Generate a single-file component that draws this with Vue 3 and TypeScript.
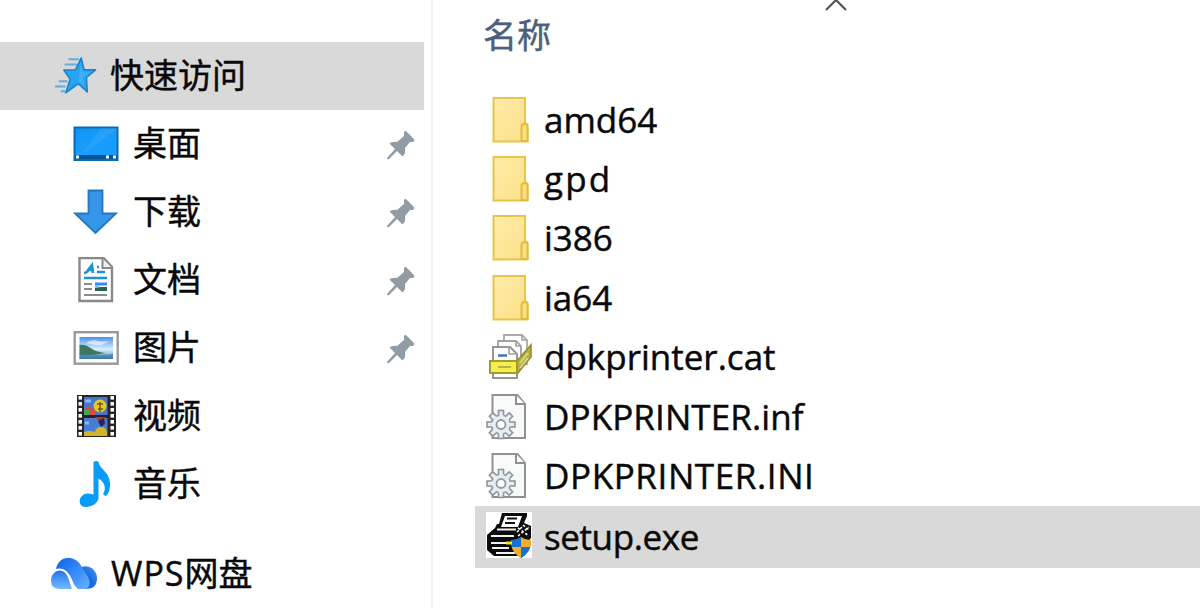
<script setup lang="ts">
interface PlaceItem { label: string; icon: string; pinned: boolean }
interface FileItem { name: string; icon: string; tone: string; selected?: boolean }

const places: PlaceItem[] = [
  { label: '桌面', icon: 'desktop', pinned: true },
  { label: '下载', icon: 'download', pinned: true },
  { label: '文档', icon: 'document', pinned: true },
  { label: '图片', icon: 'picture', pinned: true },
  { label: '视频', icon: 'video', pinned: false },
  { label: '音乐', icon: 'music', pinned: false },
]

const files: FileItem[] = [
  { name: 'amd64', icon: 'folder', tone: 'plain' },
  { name: 'gpd', icon: 'folder', tone: 'wide' },
  { name: 'i386', icon: 'folder', tone: 'plain' },
  { name: 'ia64', icon: 'folder', tone: 'plain' },
  { name: 'dpkprinter.cat', icon: 'catalog', tone: 'plain' },
  { name: 'DPKPRINTER.inf', icon: 'config', tone: 'inf' },
  { name: 'DPKPRINTER.INI', icon: 'config', tone: 'ini' },
  { name: 'setup.exe', icon: 'printer', tone: 'setup', selected: true },
]
const teeth = [0, 45, 90, 135, 180, 225, 270, 315]
const holes = [3, 9, 15, 21, 27, 33, 39]
</script>

<template>
  <div class="explorer">
    <svg width="0" height="0" class="defs">
      <defs>
        <linearGradient id="deskFill" x1="0" y1="0" x2="1" y2="1">
          <stop offset="0" stop-color="#0d95f7" /><stop offset=".5" stop-color="#1b9dfb" />
          <stop offset=".52" stop-color="#0a96fc" /><stop offset="1" stop-color="#0795ff" />
        </linearGradient>
        <linearGradient id="folderFill" x1="0" y1="0" x2="1" y2="1">
          <stop offset="0" stop-color="#ffecaa" /><stop offset="1" stop-color="#fce086" />
        </linearGradient>
        <linearGradient id="skyFill" x1="0" y1="0" x2="0" y2="1">
          <stop offset="0" stop-color="#4b91e6" /><stop offset=".55" stop-color="#d8efff" />
          <stop offset=".75" stop-color="#9fc4da" /><stop offset="1" stop-color="#3b79ad" />
        </linearGradient>
        <linearGradient id="cloudTop" x1="0" y1="0" x2="1" y2="1">
          <stop offset="0" stop-color="#0e63e8" /><stop offset=".5" stop-color="#3489fb" /><stop offset="1" stop-color="#69b5ff" />
        </linearGradient>
        <linearGradient id="cloudSide" x1="0" y1="0" x2="0" y2="1">
          <stop offset="0" stop-color="#2272ec" /><stop offset="1" stop-color="#72bcff" />
        </linearGradient>
        <linearGradient id="cloudRight" x1="0" y1="1" x2="1" y2="0">
          <stop offset="0" stop-color="#2b7ef0" /><stop offset=".5" stop-color="#1768dd" /><stop offset="1" stop-color="#4a9cff" />
        </linearGradient>
      </defs>
    </svg>

    <aside class="sidebar">
      <div class="row root active">
        <svg class="star" viewBox="0 0 44 44">
          <path d="M27.500 3l3 12.500h12L33 23.600l.8 15.200-9.300-8.700-13.200 9.500 4.500-14.300L9.200 15.800l12.200-.3z" fill="#27a4f5" stroke="#1a82c8" stroke-width="1.600" stroke-linejoin="round" />
          <path d="M27 8l2.400 10h8.200l-8.200 6.200 1.400 8-6.300-4.400z" fill="#58bfff" opacity=".45" />
          <path d="M14 4.500h11M10 10h13M4 27.500h9M0 33h11M6 38h5" fill="none" stroke="#62addb" stroke-width="2" />
        </svg>
        <span class="label">快速访问</span>
      </div>

      <div v-for="p in places" :key="p.icon" class="row child">
        <svg class="icon" viewBox="0 0 46 46">
          <g v-if="p.icon === 'desktop'">
            <rect x="1.500" y="6.500" width="43" height="32.500" fill="url(#deskFill)" stroke="#0b69ae" stroke-width="2" />
            <path d="M28 7h16v27H8z" fill="#fff" opacity=".06" />
            <path d="M2 36h42" stroke="#075493" stroke-width="4" />
            <path d="M3 36h3M33 36h3M40 36h3" stroke="#fff" stroke-width="3" />
          </g>
          <path v-else-if="p.icon === 'download'" d="M15.500 1.500h14v23H43L22.500 44 2 24.500h13.500z" fill="#3595e8" stroke="#2277bd" stroke-width="1.800" />
          <g v-else-if="p.icon === 'document'">
            <path d="M6.500 1h24l8.500 9v34H6.500z" fill="#fff" stroke="#898989" stroke-width="2.400" />
            <path d="M29.500 1.500v9.500H39" fill="#eee" stroke="#898989" stroke-width="2" />
            <path d="M11 16q3 0 5-4l3-4 1 8M14 13h7M24 10h2M24 15h8M11 21h23" fill="none" stroke="#1b92d5" stroke-width="2.600" />
            <path d="M11 27h8M11 32h8M11 38h23" stroke="#8b8b8b" stroke-width="2" />
            <path d="M22 27h12" stroke="#3586ff" stroke-width="3" /><path d="M22 32h12" stroke="#29634b" stroke-width="4" />
            <path d="M22 30h4" stroke="#77b5ff" stroke-width="2" />
          </g>
          <g v-else-if="p.icon === 'picture'">
            <rect x="1.700" y="7.200" width="43" height="31.500" fill="#fff" stroke="#999" stroke-width="2.400" />
            <rect x="6.500" y="12" width="33.500" height="22" fill="url(#skyFill)" />
            <path d="M6.500 20q6-1 11 3t15 5q-14 3-26 2z" fill="#3e7662" /><path d="M6.500 29q16 2 33.500 0v5H6.500z" fill="#397baf" opacity=".65" />
            <path d="M13 18q6-4 12-2 6 1 11 0-6 5-13 4t-10-2" fill="#fff" opacity=".6" />
          </g>
          <g v-else-if="p.icon === 'video'">
            <rect x="4" y="2" width="39" height="42" fill="#252525" />
            <rect x="11" y="4" width="23.500" height="18" fill="#4675cf" /><rect x="11" y="25" width="23.500" height="18" fill="#487dd4" />
            <path d="M11 16l4-3 4 3 4-3v9H11z" fill="#d94b3f" /><circle cx="27" cy="13" r="6.500" fill="#e9c824" />
            <path d="M24 11h6M27 9v10M25 16h5" stroke="#6e5c1c" stroke-width="1.500" />
            <path d="M11 17h5v5h-5z" fill="#43a857" /><path d="M22 24h11l-5 7z" fill="#b0344a" /><path d="M25 28l6-3 1 6-4 3z" fill="#232952" />
            <path d="M11 39q5-2 11 0 1-5 6-5t6 5v4H11z" fill="#d1b42a" /><path d="M12 8h6M12 30h4" stroke="#8bb5ef" stroke-width="3" />
            <g v-for="h in holes" :key="h"><rect x="5.500" :y="h" width="3.500" height="3.600" fill="#fff" /><rect x="37.500" :y="h" width="3.500" height="3.600" fill="#fff" /></g>
          </g>
          <path v-else d="M20.500 1q3-2 5 0c1 7 11 10 11.500 21 .2 6-1 10-3.500 12.500-2 1-4-1-3-2.500 3-5 1-11-5-14.500v19.500C25 42 19 46 12.500 46 4 46 5 33 14.500 32.500q3 0 6 1z" fill="#079cf7" />
        </svg>
        <span class="label">{{ p.label }}</span>
        <svg v-if="p.pinned" class="pin" viewBox="0 0 30 30">
          <path d="M18 2q1-2 3 0l7 7q1 2-1 3h-3l-5 6q1 5-2 8h-1l-5-5-8 8q-2 1-2-1l8-9-5.500-5.500q2.500-2.500 7.500-1.500l7-6z" fill="#919ca4" />
        </svg>
      </div>

      <div class="row root cloud">
        <svg class="cloud-icon" viewBox="0 0 46 32">
          <path d="M12 12C8 11 0 14 0 23q0 8 9 8h12Q16 14 12 12z" fill="url(#cloudSide)" />
          <path d="M31 9c7-3 15 3 15 11q0 11-11 11-6 0-8-4z" fill="url(#cloudRight)" />
          <path d="M5 11C8-4 25-3 31 9l6 10q4 8-2 12h-8q-4-3-6-9Q16 10 5 11z" fill="url(#cloudTop)" />
          <path d="M5 12Q15 9 20 22q2 6 5 9" fill="none" stroke="#fff" stroke-width="2" />
        </svg>
        <span class="label"><span class="wps">WPS</span>网盘</span>
      </div>
    </aside>

    <main class="content">
      <header class="heading">
        <span>名称</span>
        <svg class="sort" viewBox="0 0 24 12"><path d="M2 10L12 0l10 10" fill="none" stroke="#555" stroke-width="2.200" /></svg>
      </header>
      <div class="files">
        <div v-for="f in files" :key="f.name" class="file" :class="{ selected: f.selected }">
          <svg class="file-icon" viewBox="0 0 46 46">
            <g v-if="f.icon === 'folder'">
              <path d="M7.500 1h31.500v25l2.500 1.500v17h-34z" fill="url(#folderFill)" stroke="#e8c549" stroke-width="2" />
              <path d="M35.500 44V30q0-3 3-3t3 3v14z" fill="#fbdf80" stroke="#e3bb40" stroke-width="2" />
            </g>
            <g v-else-if="f.icon === 'catalog'">
              <path d="M18 8V1h18l5 5v24H18z" fill="#fff" stroke="#aaa" stroke-width="1.800" />
              <path d="M12 14V7h18l5 5v23H12z" fill="#fff" stroke="#a1a1a1" stroke-width="1.800" />
              <path d="M7 44V13h17l7 7v24z" fill="#fff" stroke="#959595" stroke-width="2" />
              <path d="M23 13v7h8M30 7v5h5M36 1v5h5" fill="none" stroke="#a1a1a1" stroke-width="1.600" />
              <path d="M12 21.500h9" stroke="#3d76bc" stroke-width="2.500" />
              <path d="M31 27L45 11v12L31 40z" fill="#b7b240" stroke="#928c2c" stroke-width="1.600" />
              <path d="M34 29l8-10M34 34l8-10" stroke="#ddd785" stroke-width="2" />
              <rect x="4" y="27" width="27" height="12" fill="#f4ef4b" stroke="#a39c2c" stroke-width="2" />
              <path d="M12 33h13" stroke="#abae4a" stroke-width="1.800" />
            </g>
            <g v-else-if="f.icon === 'config'">
              <path d="M6.500 1h25l7.500 9v34H6.500z" fill="#f8f9f9" stroke="#919191" stroke-width="2" />
              <path d="M30 1v9h9" fill="#fff" stroke="#919191" stroke-width="2" />
              <g transform="translate(15 30.500)">
                <rect v-for="a in teeth" :key="a" x="-2.500" y="-14" width="5" height="6" :transform="`rotate(${a})`" fill="#e7edf1" stroke="#8d969c" stroke-width="1.600" />
                <circle r="10" fill="#e7edf1" /><circle r="9.500" fill="none" stroke="#929ba0" stroke-width="1.600" stroke-dasharray="3.300 4.161" stroke-dashoffset="5.380" />
                <circle r="4.500" fill="#fff" stroke="#929ba0" stroke-width="1.800" />
              </g>
            </g>
            <g v-else>
              <rect x="0" y="0" width="46" height="46" fill="#fff" />
              <path d="M16 1h25v3l-3 7 7 3v12l-6 7-3 8-4 3H8l-7-6V23l8-7 2-4h2z" fill="#0b0b0b" />
              <path d="M19 4h17l-4 11H15z" fill="#fff" />
              <path d="M21 6.500h10M19 11h10" stroke="#111" stroke-width="2" />
              <path d="M11 17.500h19M5 24h23M5 31h15M6 36h17M10 41h19" stroke="#f2f2f2" stroke-width="2.200" />
              <path d="M32 16l11 8M32 24l11-9M37 13l6 5M31 20l5-5" stroke="#fff" stroke-width="1.600" stroke-dasharray="2.500 2" />
              <path d="M35 25q4 3 10 3 0 12-10 18-10-6-10-18 6 0 10-3z" fill="#1469bf" />
              <path d="M35 25v10h-9.500q-.7-3-.5-7 6 0 10-3M35 35h9.500Q42 42 35 46z" fill="#1672cc" />
              <path d="M35 25q4 3 10 3 .2 4-.5 7H35zM25.500 35H35v11q-7-4-9.500-11" fill="#f4ae2c" />
              <path d="M20 31h6" stroke="#ffe700" stroke-width="3" />
            </g>
          </svg>
          <span class="filename" :class="f.tone">{{ f.name }}</span>
        </div>
      </div>
    </main>
  </div>
</template>

<style>
body { margin: 0; background: #fff; }
</style>
<style scoped>
.explorer { display: flex; width: 1200px; height: 608px; overflow: hidden; background: #fff; color: #090909; font-family: "Open Sans", "Noto Sans CJK SC", sans-serif; font-size: 34px; -webkit-text-stroke: .45px currentColor; }
.defs { position: absolute; }
.sidebar { box-sizing: border-box; width: 433px; padding-top: 42px; border-right: 2px solid #f4f4f4; flex: none; }
.row { display: flex; align-items: center; box-sizing: border-box; height: 68px; width: 424px; }
.root { padding-left: 55px; }
.active { background: #d9d9d9; }
.star { width: 42px; height: 42px; margin-right: 13px; }
.label { line-height: 64px; height: 68px; white-space: nowrap; font-family: "Noto Sans CJK SC", sans-serif; }
.child { padding-left: 73px; padding-right: 8px; }
.icon { width: 46px; height: 46px; margin-right: 14px; flex: none; }
.pin { width: 30px; height: 30px; margin-left: auto; margin-top: 2px; }
.cloud { margin-top: 22px; padding-left: 51px; }
.cloud-icon { width: 46px; height: 32px; margin-right: 14px; }
.wps { font-family: "Open Sans", sans-serif; font-size: 34px; letter-spacing: 1px; }
.content { flex: 1; padding-left: 42px; }
.heading { display: flex; height: 90px; padding-left: 9px; color: #4c607a; line-height: 70px; }
.heading > span { margin-left: -1px; }
.sort { width: 24px; height: 12px; margin-left: 273px; }
.file { display: flex; align-items: center; height: 59.4px; padding-left: 11px; }
.file.selected { height: 62px; background: #d9d9d9; }
.file.selected .file-icon { margin-top: -4px; }
.file-icon { width: 46px; height: 46px; flex: none; margin-right: 12px; }
.filename { font-size: 35px; line-height: 58px; white-space: nowrap; }
.wide { letter-spacing: 2.2px; }
.inf { letter-spacing: .1px; }
.ini { letter-spacing: .6px; }
.setup { letter-spacing: -.4px; }
</style>
